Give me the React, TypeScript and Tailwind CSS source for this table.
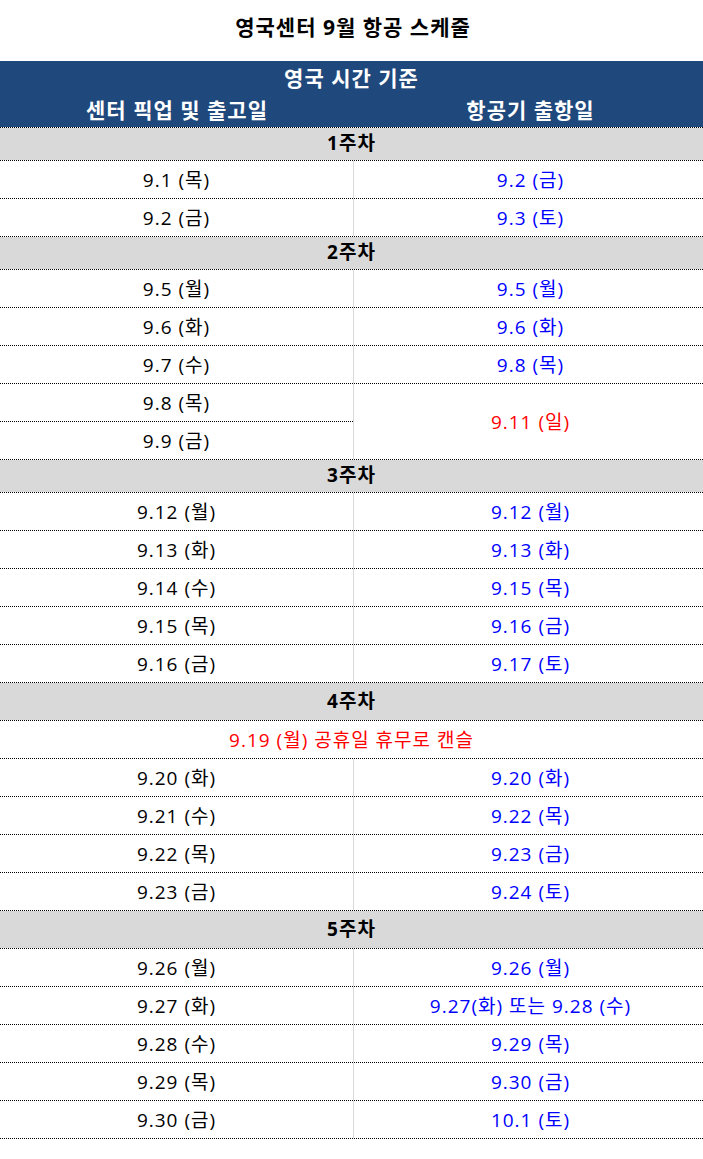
import React from "react";

type Row =
  | { kind: "week"; label: string; tall?: boolean }
  | { kind: "data"; left: string; right: string }
  | { kind: "merged"; lefts: string[]; right: string }
  | { kind: "full"; text: string };

const rows: Row[] = [
  { kind: "week", label: "1주차" },
  { kind: "data", left: "9.1 (목)", right: "9.2 (금)" },
  { kind: "data", left: "9.2 (금)", right: "9.3 (토)" },
  { kind: "week", label: "2주차" },
  { kind: "data", left: "9.5 (월)", right: "9.5 (월)" },
  { kind: "data", left: "9.6 (화)", right: "9.6 (화)" },
  { kind: "data", left: "9.7 (수)", right: "9.8 (목)" },
  { kind: "merged", lefts: ["9.8 (목)", "9.9 (금)"], right: "9.11 (일)" },
  { kind: "week", label: "3주차" },
  { kind: "data", left: "9.12 (월)", right: "9.12 (월)" },
  { kind: "data", left: "9.13 (화)", right: "9.13 (화)" },
  { kind: "data", left: "9.14 (수)", right: "9.15 (목)" },
  { kind: "data", left: "9.15 (목)", right: "9.16 (금)" },
  { kind: "data", left: "9.16 (금)", right: "9.17 (토)" },
  { kind: "week", label: "4주차", tall: true },
  { kind: "full", text: "9.19 (월) 공휴일 휴무로 캔슬" },
  { kind: "data", left: "9.20 (화)", right: "9.20 (화)" },
  { kind: "data", left: "9.21 (수)", right: "9.22 (목)" },
  { kind: "data", left: "9.22 (목)", right: "9.23 (금)" },
  { kind: "data", left: "9.23 (금)", right: "9.24 (토)" },
  { kind: "week", label: "5주차", tall: true },
  { kind: "data", left: "9.26 (월)", right: "9.26 (월)" },
  { kind: "data", left: "9.27 (화)", right: "9.27(화) 또는 9.28 (수)" },
  { kind: "data", left: "9.28 (수)", right: "9.29 (목)" },
  { kind: "data", left: "9.29 (목)", right: "9.30 (금)" },
  { kind: "data", left: "9.30 (금)", right: "10.1 (토)" },
];

const font = "font-['Open_Sans','Noto_Sans_CJK_KR',sans-serif]";
const cellText = "text-[19px] tracking-[1px] leading-none";

export default function App() {
  return (
    <div className={`w-[703px] h-[1159px] bg-white ${font} text-black`}>
      <div className="h-[61px] flex items-center justify-center pb-[6px] pl-[3px]">
        <h1 className="text-[21px] font-bold leading-none tracking-[1px]">영국센터 9월 항공 스케줄</h1>
      </div>
      <div className="bg-[#1f497d] bg-clip-padding text-white font-bold text-[21px] tracking-[1px] border-b border-dotted border-black">
        <div className="h-[33px] flex items-center justify-center leading-none pt-[1px]">영국 시간 기준</div>
        <div className="h-[33px] flex leading-none pb-[1px]">
          <div className="w-[354px] flex items-center justify-center">센터 픽업 및 출고일</div>
          <div className="flex-1 flex items-center justify-center pl-[4px]">항공기 출항일</div>
        </div>
      </div>
      {rows.map((r, i) => {
        if (r.kind === "week") {
          return (
            <div
              key={i}
              className={`${r.tall ? "h-[38px]" : "h-[33px]"} bg-[#d9d9d9] bg-clip-padding border-b border-dotted border-black flex items-center justify-center font-bold text-[19px] tracking-[1px] leading-none pb-[1px]`}
            >
              {r.label}
            </div>
          );
        }
        if (r.kind === "full") {
          return (
            <div
              key={i}
              className={`h-[38px] border-b border-dotted border-black flex items-center justify-center pt-[2px] text-[#ff0000] ${cellText}`}
            >
              {r.text}
            </div>
          );
        }
        if (r.kind === "merged") {
          return (
            <div key={i} className={`flex border-b border-dotted border-black ${cellText}`}>
              <div className="w-[354px] border-r border-[#d9d9d9] flex flex-col">
                <div className="h-[38px] flex items-center justify-center pt-[2px] border-b border-dotted border-black">
                  {r.lefts[0]}
                </div>
                <div className="h-[37px] flex items-center justify-center pt-[2px]">{r.lefts[1]}</div>
              </div>
              <div className="flex-1 flex items-center justify-center pt-[2px] text-[#ff0000] pl-[4px]">{r.right}</div>
            </div>
          );
        }
        return (
          <div key={i} className={`h-[38px] flex border-b border-dotted border-black ${cellText}`}>
            <div className="w-[354px] border-r border-[#d9d9d9] flex items-center justify-center pt-[2px]">{r.left}</div>
            <div className="flex-1 flex items-center justify-center pt-[2px] text-[#0000ff] pl-[4px]">{r.right}</div>
          </div>
        );
      })}
    </div>
  );
}
